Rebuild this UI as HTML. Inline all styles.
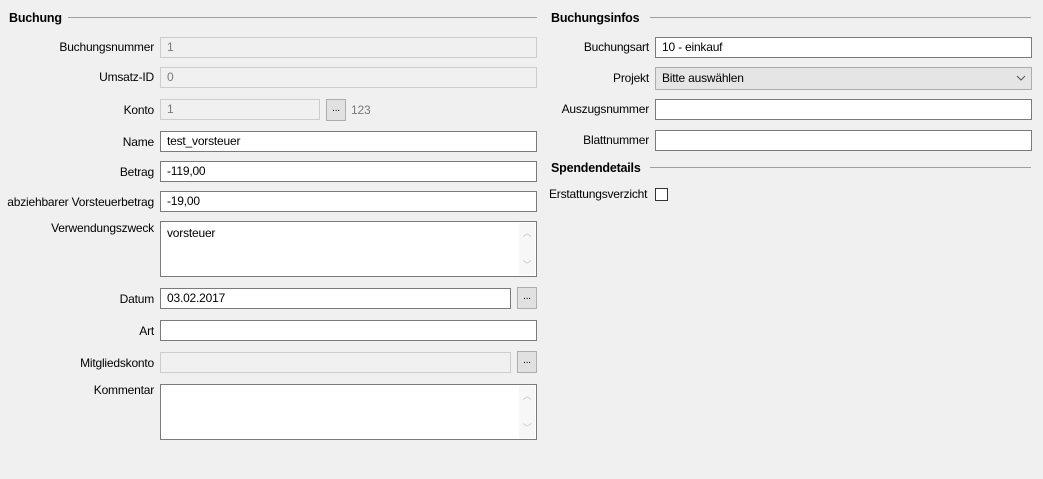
<!DOCTYPE html>
<html><head><meta charset="utf-8"><style>
body{margin:0;width:1043px;height:479px;background:#f0f0f0;font-family:"Liberation Sans",sans-serif;font-size:12px;color:#000;position:relative;overflow:hidden;letter-spacing:-0.2px}
div{position:absolute;box-sizing:border-box}
.h{font-weight:bold;font-size:12.5px}
.ln{height:1px;background:#a0a0a0}
.l{width:154px;left:0;text-align:right;line-height:14px}
.lr{left:540px;width:109px;text-align:right;line-height:14px}
.i{background:#fff;border:1px solid #7a7a7a;padding:2px 6px;line-height:14px;height:21px}
.d{background:#f0f0f0;border:1px solid #ccc;color:#7a7a7a}
.b{border:1px solid #adadad;background:#e1e1e1;width:20px;height:22px;text-align:center;line-height:17px;font-size:10px;color:#000}
.sb{right:1px;top:1px;bottom:1px;width:16px;background:#f7f7f7;color:#c0c0c0;font-size:9px;text-align:center}
</style></head><body>
<div class="h" style="left:9px;top:11px">Buchung</div>
<div class="ln" style="left:68px;top:17px;width:469px"></div>
<div class="h" style="left:551px;top:11px">Buchungsinfos</div>
<div class="ln" style="left:650px;top:17px;width:381px"></div>

<div class="l" style="top:40px">Buchungsnummer</div>
<div class="i d" style="left:160px;top:37px;width:377px">1</div>
<div class="l" style="top:70px">Umsatz-ID</div>
<div class="i d" style="left:160px;top:67px;width:377px">0</div>
<div class="l" style="top:103px">Konto</div>
<div class="i d" style="left:160px;top:99px;width:160px">1</div>
<div class="b" style="left:326px;top:99px">...</div>
<div style="left:351px;top:103px;color:#7a7a7a">123</div>
<div class="l" style="top:135px">Name</div>
<div class="i" style="left:160px;top:131px;width:377px">test_vorsteuer</div>
<div class="l" style="top:165px">Betrag</div>
<div class="i" style="left:160px;top:161px;width:377px">-119,00</div>
<div class="l" style="top:195px">abziehbarer Vorsteuerbetrag</div>
<div class="i" style="left:160px;top:191px;width:377px">-19,00</div>
<div class="l" style="top:221px">Verwendungszweck</div>
<div class="i" style="left:160px;top:221px;width:377px;height:56px;padding-top:4px">vorsteuer<div class="sb"><div style="position:absolute;top:3px;width:16px">︿</div><div style="position:absolute;bottom:3px;width:16px">﹀</div></div></div>
<div class="l" style="top:292px">Datum</div>
<div class="i" style="left:160px;top:288px;width:351px">03.02.2017</div>
<div class="b" style="left:517px;top:287px">...</div>
<div class="l" style="top:324px">Art</div>
<div class="i" style="left:160px;top:320px;width:377px"></div>
<div class="l" style="top:356px">Mitgliedskonto</div>
<div class="i d" style="left:160px;top:352px;width:351px"></div>
<div class="b" style="left:517px;top:351px">...</div>
<div class="l" style="top:383px">Kommentar</div>
<div class="i" style="left:160px;top:384px;width:377px;height:56px"><div class="sb"><div style="position:absolute;top:3px;width:16px">︿</div><div style="position:absolute;bottom:3px;width:16px">﹀</div></div></div>

<div class="lr" style="top:40px">Buchungsart</div>
<div class="i" style="left:655px;top:37px;width:377px">10 - einkauf</div>
<div class="lr" style="top:71px">Projekt</div>
<div class="i" style="left:655px;top:67px;width:377px;height:23px;background:#e5e5e5;border-color:#adadad;padding-top:3px">Bitte auswählen<svg style="position:absolute;right:5px;top:7px" width="10" height="6"><path d="M1 1L5 5L9 1" stroke="#555" fill="none"/></svg></div>
<div class="lr" style="top:102px">Auszugsnummer</div>
<div class="i" style="left:655px;top:99px;width:377px"></div>
<div class="lr" style="top:133px">Blattnummer</div>
<div class="i" style="left:655px;top:130px;width:377px"></div>
<div class="h" style="left:551px;top:161px">Spendendetails</div>
<div class="ln" style="left:650px;top:167px;width:381px"></div>
<div style="left:549px;top:187px">Erstattungsverzicht</div>
<div style="left:655px;top:188px;width:13px;height:13px;border:1px solid #333;background:#fff"></div>
</body></html>
